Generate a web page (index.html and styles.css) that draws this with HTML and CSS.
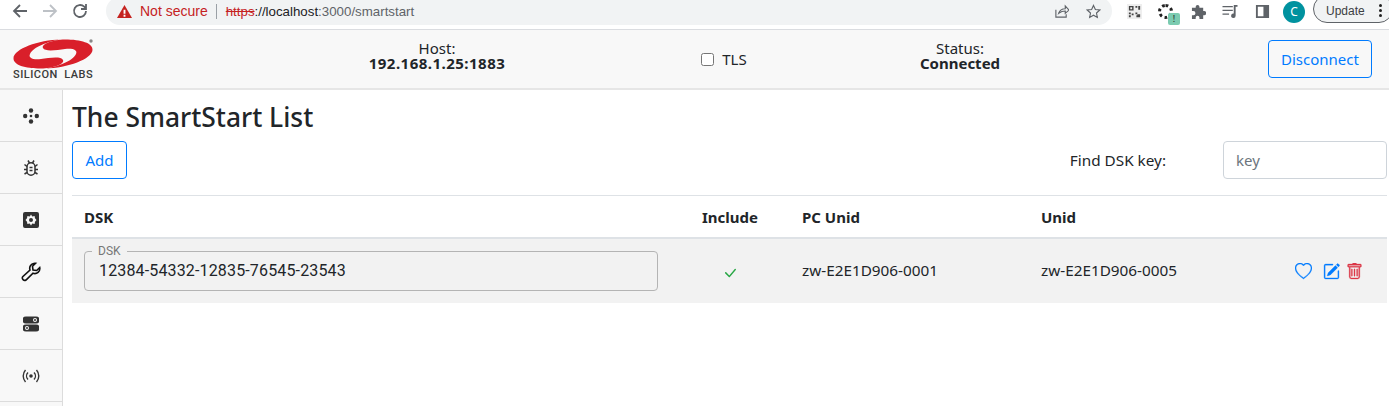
FILE: index.html
```html
<!DOCTYPE html>
<html>

<head>
    <title>SmartStart</title>
    <link rel="stylesheet" href="styles.css">
</head>

<body>
    <!-- browser toolbar -->
    <div class="chrome">
        <div class="chrome-nav">
            <svg class="nav-btn" viewBox="0 0 16 16"><path d="M15 8H2M8 2 2 8l6 6" /></svg>
            <svg class="nav-btn nav-off" viewBox="0 0 16 16"><path d="M1 8h13M8 2l6 6-6 6" /></svg>
            <svg class="nav-btn" viewBox="0 0 16 16"><path d="M14 8a6 6 0 1 1-1.800-4.300L14 5.500M14 1v5H9" /></svg>
        </div>
        <div class="omnibox">
            <svg class="warn" viewBox="0 0 16 16"><path d="M8 1 16 15H0z" fill="#c5221f" /><path d="M7 6h2v4.500H7zM7 11.500h2v2H7z" fill="#fff" /></svg>
            <span class="not-secure">Not secure</span>
            <span class="omni-sep"></span>
            <span class="url"><s class="https">https</s>://localhost<span class="url-dim">:3000/smartstart</span></span>
            <span class="omni-right">
                <svg class="omni-icon" viewBox="0 0 16 16"><path d="M2 6v8h11v-3M5 10c1-3 4-5 7-5V2l4 4.500L12 10V7.500c-3 0-5 1-7 2.500z" /></svg>
                <svg class="omni-icon" viewBox="0 0 16 16"><path d="m8 1.500 2 4.300 4.700.6-3.500 3.200.9 4.700L8 12l-4.100 2.300.9-4.700-3.500-3.200L6 5.800z" /></svg>
            </span>
        </div>
        <div class="chrome-tools">
            <svg class="ext ext-qr" viewBox="0 0 16 16">
                <rect width="16" height="16" fill="#eee" />
                <path d="M2 2h5v5H2zm1.500 1.500v2h2v-2zM9 2h2v2H9zM12 2h2v4h-2zM2 9h2v2H2zM5 10h2v2H5zM2 12h2v2H2zM9 9h2v2H9zM11 11h3v3h-4v-2h1z" fill="#444" fill-rule="evenodd" />
            </svg>
            <span class="ext-ring"><span class="ext-badge">!</span></span>
            <svg class="ext ext-puzzle" viewBox="0 0 16 16"><path d="M1 4h4V3a2 2 0 0 1 4 0v1h4v3.500h1a2.200 2.200 0 0 1 0 4.500h-1v4H9v-1.500a2 2 0 0 0-4 0V16H1v-4h1.500a2.200 2.200 0 0 0 0-4.500H1z" fill="#5f6368" /></svg>
            <svg class="ext ext-media" viewBox="0 0 16 16"><path d="M0 2h11v1.500H0zM0 6h11v1.500H0zM0 10h7v1.500H0zM12 1h4v2h-2v9.500a2.400 2.400 0 1 1-2-2.300z" fill="#5f6368" /></svg>
            <svg class="ext ext-panel" viewBox="0 0 16 16"><path d="M1 1h14v14H1zM3 3v10h6V3z" fill="#5f6368" fill-rule="evenodd" /></svg>
            <span class="avatar">C</span>
            <span class="update">Update<span class="dots"><i></i><i></i><i></i></span></span>
        </div>
    </div>

    <!-- app header -->
    <header class="navbar">
        <div class="logo">
            <svg class="logo-mark" viewBox="0 0 80 30">
                <path d="M48 .5C25 1 1 10 .5 19 0 26 12 29.500 28 29.500c12 0 24-4.500 22-8.500-2-4-14-2-22-1-8 1-13-1-11-5C20 8 36 2 48 .5z" fill="#d91f2a" />
                <path d="M32 29.500C55 29 79 20 79.500 11 80 4 68 .5 52 .5c-12 0-24 4.500-22 8.500 2 4 14 2 22 1 8-1 13 1 11 5-3 7-19 13-31 14.500z" fill="#d91f2a" />
                <circle cx="78" cy="2" r="1.700" fill="#888" />
            </svg>
            <span class="logo-text">SILICON LABS</span>
        </div>
        <div class="nav-stat"><span class="stat-label">Host:</span><b class="stat-ip">192.168.1.25:1883</b></div>
        <label class="tls"><input type="checkbox" class="tls-box"> TLS</label>
        <div class="nav-stat"><span class="stat-label">Status:</span><b>Connected</b></div>
        <button class="btn btn-disconnect">Disconnect</button>
    </header>

    <div class="layout">
        <nav class="sidebar">
            <a class="side-item">
                <svg viewBox="0 0 16 16"><circle cx="8" cy="2.500" r="2.200" /><circle cx="8" cy="13.500" r="2.200" /><circle cx="2.200" cy="8" r="2.200" /><circle cx="13.800" cy="8" r="2.200" /><circle cx="8" cy="8" r="1.300" /></svg>
            </a>
            <a class="side-item">
                <svg class="side-bug" viewBox="0 0 16 16"><path d="M5 .5 6.500 3M11 .5 9.500 3M1.500 4.500 4 6.500M14.500 4.500 12 6.500M1 9.500h3M15 9.500h-3M1.500 14 4 12.500M14.500 14 12 12.500" /><rect x="4" y="2.800" width="8" height="12.400" rx="4" /><path d="M6.500 7.500h3M6.500 10.500h3" /></svg>
            </a>
            <a class="side-item">
                <svg viewBox="0 0 16 16"><path d="M2 0h12a2 2 0 0 1 2 2v12a2 2 0 0 1-2 2H2a2 2 0 0 1-2-2V2a2 2 0 0 1 2-2zm6 2.500 1.300 1.900 2.300-.4.400 2.300L13.500 8 12 9.700l-.4 2.300-2.300-.4L8 13.500l-1.300-1.900-2.300.4-.4-2.300L2.500 8 4 6.300 4.400 4l2.300.4zm0 3.500a2 2 0 1 0 0 4 2 2 0 0 0 0-4z" fill-rule="evenodd" /></svg>
            </a>
            <a class="side-item side-wrench">
                <svg viewBox="0 0 20 20"><path d="M12.500 1.500a5 5 0 0 1 2-.2l-3 3 .5 3.700 3.700.5 3-3a5 5 0 0 1-6.700 5.700L5 18a2.400 2.400 0 0 1-3.300-3.300l7.300-6.700a5 5 0 0 1 3.500-6.500z" /></svg>
            </a>
            <a class="side-item">
                <svg viewBox="0 0 16 16"><path d="M3 .5h10a3.500 3.500 0 0 1 0 7H3a3.500 3.500 0 0 1 0-7zm9 1.500a2 2 0 1 0 0 4 2 2 0 0 0 0-4zm0 1a1 1 0 1 1 0 2 1 1 0 0 1 0-2zM3 8.500h10a3.500 3.500 0 0 1 0 7H3a3.500 3.500 0 0 1 0-7zm1 1.500a2 2 0 1 0 0 4 2 2 0 0 0 0-4zm0 1a1 1 0 1 1 0 2 1 1 0 0 1 0-2z" fill-rule="evenodd" /></svg>
            </a>
            <a class="side-item">
                <svg viewBox="0 0 18 14" class="side-radio"><circle cx="9" cy="7" r="1.800" class="radio-dot" /><path d="M6 3.500a5 5 0 0 0 0 7M12 3.500a5 5 0 0 1 0 7M3.500 1a9 9 0 0 0 0 12M14.500 1a9 9 0 0 1 0 12" /></svg>
            </a>
        </nav>

        <main class="content">
            <h3 class="page-title">The SmartStart List</h3>
            <div class="toolbar">
                <button class="btn btn-add">Add</button>
                <label class="find-label">Find DSK key:</label>
                <input class="find-input" type="text" placeholder="key">
            </div>
            <table class="list">
                <thead>
                    <tr>
                        <th class="col-dsk">DSK</th>
                        <th class="col-include">Include</th>
                        <th class="col-pc">PC Unid</th>
                        <th class="col-unid">Unid</th>
                        <th></th>
                    </tr>
                </thead>
                <tbody>
                    <tr>
                        <td>
                            <fieldset class="dsk-field">
                                <legend>DSK</legend>
                                <input type="text" value="12384-54332-12835-76545-23543" readonly>
                            </fieldset>
                        </td>
                        <td class="cell-center">
                            <svg class="check" viewBox="0 0 16 16"><path d="M12.736 3.970a.733.733 0 0 1 1.047 0c.286.289.29.756.01 1.050L7.880 12.010a.733.733 0 0 1-1.065.02L3.217 8.384a.757.757 0 0 1 0-1.060.733.733 0 0 1 1.047 0l3.052 3.093 5.400-6.425a.247.247 0 0 1 .02-.022Z" /></svg>
                        </td>
                        <td class="cell-text">zw-E2E1D906-0001</td>
                        <td class="cell-text">zw-E2E1D906-0005</td>
                        <td class="cell-actions">
                            <div class="actions">
                                <svg class="act act-blue" viewBox="0 0 16 16"><path d="m8 2.748-.717-.737C5.600.281 2.514.878 1.400 3.053c-.523 1.023-.641 2.500.314 4.385.92 1.815 2.834 3.989 6.286 6.357 3.452-2.368 5.365-4.542 6.286-6.357.955-1.886.838-3.362.314-4.385C13.486.878 10.400.28 8.717 2.010L8 2.748zM8 15C-7.333 4.868 3.279-3.040 7.824 1.143c.06.055.119.112.176.171a3.120 3.120 0 0 1 .176-.17C12.720-3.042 23.333 4.867 8 15z" /></svg>
                                <svg class="act act-blue act-edit" viewBox="0 0 16 16"><path d="M15.502 1.940a.5.5 0 0 1 0 .706L14.459 3.690l-2-2L13.502.646a.5.5 0 0 1 .707 0l1.293 1.293zm-1.750 2.456-2-2L4.939 9.210a.5.5 0 0 0-.121.196l-.805 2.414a.25.25 0 0 0 .316.316l2.414-.805a.5.5 0 0 0 .196-.12l6.813-6.814z" /><path d="M1 13.500A1.500 1.500 0 0 0 2.500 15h11a1.500 1.500 0 0 0 1.500-1.500v-6a.5.5 0 0 0-1 0v6a.5.5 0 0 1-.5.5h-11a.5.5 0 0 1-.5-.5v-11a.5.5 0 0 1 .5-.5H9a.5.5 0 0 0 0-1H2.500A1.500 1.500 0 0 0 1 2.500v11z" /></svg>
                                <svg class="act act-red act-trash" viewBox="0 0 16 16"><path d="M5.500 5.500A.5.5 0 0 1 6 6v6a.5.5 0 0 1-1 0V6a.5.5 0 0 1 .5-.5zm2.500 0a.5.5 0 0 1 .5.5v6a.5.5 0 0 1-1 0V6a.5.5 0 0 1 .5-.5zm3 .5a.5.5 0 0 0-1 0v6a.5.5 0 0 0 1 0V6z" /><path d="M14.500 3a1 1 0 0 1-1 1H13v9a2 2 0 0 1-2 2H5a2 2 0 0 1-2-2V4h-.5a1 1 0 0 1-1-1V2a1 1 0 0 1 1-1H6a1 1 0 0 1 1-1h2a1 1 0 0 1 1 1h3.500a1 1 0 0 1 1 1v1zM4.118 4 4 4.059V13a1 1 0 0 0 1 1h6a1 1 0 0 0 1-1V4.059L11.882 4H4.118zM2.500 3V2h11v1h-11z" fill-rule="evenodd" /></svg>
                            </div>
                        </td>
                    </tr>
                </tbody>
            </table>
        </main>
    </div>
</body>

</html>
```

FILE: styles.css
```css
html,
body {
    margin: 0;
    padding: 0;
    height: 406px;
    overflow: hidden;
}

body {
    font-family: "Noto Sans", "Open Sans", sans-serif;
    font-size: 15px;
    color: #212529;
    background-color: #fff;
}

/* browser toolbar */
.chrome {
    display: flex;
    align-items: flex-start;
    height: 29px;
    background-color: #fff;
    border-bottom: 1px solid #dadce0;
}

.chrome-nav {
    display: flex;
    flex: none;
    gap: 14px;
    width: 106px;
    box-sizing: border-box;
    padding: 3px 0 0 12px;
}

.nav-btn {
    width: 16px;
    height: 16px;
    fill: none;
    stroke: #5f6368;
    stroke-width: 1.800;
}

.nav-off {
    stroke: #bdc1c6;
}

.omnibox {
    display: flex;
    align-items: center;
    flex: none;
    width: 1006px;
    height: 28px;
    margin-top: -3px;
    box-sizing: border-box;
    padding-left: 11px;
    background-color: #f1f3f4;
    border-radius: 14px;
    font-family: "Liberation Sans", Arial, sans-serif;
    font-size: 14px;
}

.warn {
    width: 15px;
    height: 15px;
    margin-right: 8px;
}

.not-secure {
    color: #c5221f;
}

.omni-sep {
    width: 1px;
    height: 15px;
    margin: 0 9px 0 8px;
    background-color: #9aa0a6;
}

.url {
    color: #202124;
    font-size: 13.300px;
}

.url-dim {
    color: #5f6368;
}

.https {
    color: #c5221f;
}

.omni-right {
    display: flex;
    gap: 17px;
    margin-left: auto;
    padding-right: 11px;
}

.omni-icon {
    width: 15px;
    height: 15px;
    fill: none;
    stroke: #5f6368;
    stroke-width: 1.200;
}

.chrome-tools {
    display: flex;
    flex: none;
    align-items: center;
    height: 23px;
    padding-left: 15px;
}

.ext {
    width: 15px;
    height: 15px;
    flex: none;
}

.ext-ring {
    position: relative;
    flex: none;
    width: 9px;
    height: 9px;
    margin-left: 16px;
    border: 3px dotted #222;
    border-radius: 50%;
}

.ext-badge {
    position: absolute;
    left: 7px;
    top: 6px;
    width: 12px;
    height: 12px;
    background-color: #7bcbb0;
    border-radius: 2px;
    color: #222;
    font-size: 9px;
    line-height: 12px;
    text-align: center;
}

.ext-puzzle {
    margin-left: 18px;
}

.ext-media {
    width: 16px;
    margin-left: 16px;
}

.ext-panel {
    margin-left: 17px;
}

.avatar {
    flex: none;
    width: 22px;
    height: 22px;
    margin-left: 13px;
    background-color: #00929f;
    border-radius: 50%;
    color: #fff;
    font-size: 12px;
    line-height: 22px;
    text-align: center;
}

.update {
    display: flex;
    align-items: center;
    flex: none;
    width: 80px;
    height: 28px;
    margin: -5px 0 0 8px;
    box-sizing: border-box;
    padding: 3px 0 0 12px;
    background-color: #f1f3f4;
    border: 1px solid #5f6368;
    border-radius: 14px;
    color: #3c4043;
    font-family: "Liberation Sans", Arial, sans-serif;
    font-size: 12px;
}

.dots {
    display: flex;
    flex-direction: column;
    gap: 2px;
    margin-left: 14px;
}

.dots i {
    width: 3px;
    height: 3px;
    background-color: #222;
    border-radius: 50%;
}

/* app header */
.navbar {
    display: grid;
    grid-template-columns: 227px 394px 180px 292px 1fr;
    align-items: center;
    height: 58px;
    padding: 0 17px 0 13px;
    background-color: #f8f8f8;
    border-bottom: 2px solid #e6e6e6;
}

.logo {
    display: flex;
    flex-direction: column;
    width: 80px;
}

.logo-mark {
    width: 80px;
    height: 30px;
}

.logo-text {
    margin-top: 1px;
    font-family: Roboto, sans-serif;
    font-size: 11px;
    font-weight: 500;
    line-height: 10px;
    letter-spacing: 0.500px;
    word-spacing: 3px;
    white-space: nowrap;
    color: #3a3a3a;
}

.nav-stat {
    padding-bottom: 7px;
    text-align: center;
}

.stat-label {
    display: block;
    height: 16px;
    line-height: 16px;
}

.nav-stat b {
    display: block;
    height: 15px;
    line-height: 15px;
}

.nav-stat .stat-ip {
    letter-spacing: 0.480px;
}

.tls {
    display: flex;
    align-items: center;
    justify-content: center;
    gap: 8px;
}

.tls-box {
    width: 13px;
    height: 13px;
    margin: 0;
}

.btn {
    padding: 0;
    background-color: transparent;
    border: 1px solid #007bff;
    border-radius: 4px;
    color: #007bff;
    font-family: inherit;
    font-size: 15px;
    cursor: pointer;
}

.btn-disconnect {
    justify-self: end;
    width: 104px;
    height: 38px;
}

/* page body */
.layout {
    display: flex;
}

.sidebar {
    flex: none;
    width: 62px;
    height: 330px;
    background-color: #f8f8f8;
    border-right: 1px solid #dcdcdc;
}

.side-item {
    display: flex;
    align-items: center;
    justify-content: center;
    height: 51px;
    border-bottom: 1px solid #dcdcdc;
}

.side-item svg {
    width: 16px;
    height: 16px;
    fill: #333;
}

.side-item .side-bug {
    fill: none;
    stroke: #333;
    stroke-width: 1.500;
}

.side-wrench svg {
    width: 20px;
    height: 20px;
    fill: none;
    stroke: #111;
    stroke-width: 1.600;
}

.side-item .side-radio {
    width: 18px;
    height: 14px;
    fill: none;
    stroke: #333;
    stroke-width: 1.400;
}

.radio-dot {
    fill: #333;
    stroke: none;
}

.content {
    flex: 1;
    min-width: 0;
    padding: 11px 2px 0 9px;
}

.page-title {
    margin: 0 0 8px;
    font-size: 26.400px;
    font-weight: 500;
    line-height: 32px;
}

.toolbar {
    display: flex;
    align-items: center;
    height: 38px;
    padding-bottom: 16px;
    border-bottom: 1px solid #dee2e6;
}

.btn-add {
    width: 55px;
    height: 38px;
}

.find-label {
    margin-left: auto;
    margin-right: 57px;
    font-size: 15.300px;
}

.find-input {
    width: 164px;
    height: 38px;
    box-sizing: border-box;
    padding: 0 12px;
    background-color: #fff;
    border: 1px solid #ced4da;
    border-radius: 4px;
    font-family: inherit;
    font-size: 15px;
}

.find-input::placeholder {
    color: #6c757d;
}

/* list table */
.list {
    width: 100%;
    table-layout: fixed;
    border-collapse: collapse;
}

.list th {
    height: 41px;
    padding: 0 12px;
    border-bottom: 2px solid #dee2e6;
    font-weight: 700;
    text-align: left;
}

.col-dsk {
    width: 574px;
}

.col-include {
    width: 96px;
}

.col-pc,
.col-unid {
    width: 215px;
}

.list th.col-include {
    text-align: center;
}

.list td {
    height: 64px;
    padding: 0 12px;
    background-color: #f2f2f2;
    font-size: 15.300px;
}

.list td.cell-center {
    text-align: center;
}

.list td.cell-text {
    height: 62px;
    padding-bottom: 2px;
}

.dsk-field {
    height: 45px;
    box-sizing: border-box;
    margin: 0 0 5px;
    padding: 0 14px;
    border: 1px solid #b4b4b4;
    border-radius: 4px;
}

.dsk-field legend {
    margin-left: -7px;
    padding: 0 6px;
    color: #777;
    font-family: Roboto, sans-serif;
    font-size: 12px;
    line-height: 11px;
}

.dsk-field input {
    width: 100%;
    padding: 4px 0 0;
    background: transparent;
    border: 0;
    outline: 0;
    color: #212529;
    font-family: Roboto, sans-serif;
    font-size: 16px;
    letter-spacing: 0.150px;
}

.check {
    width: 16px;
    height: 16px;
    fill: #28a745;
    vertical-align: middle;
}

.list td.cell-actions {
    padding: 0 24px 0 0;
}

.actions {
    display: flex;
    justify-content: flex-end;
}

.act {
    width: 17px;
    height: 17px;
    flex: none;
    stroke-width: 0.300;
}

.act-edit {
    margin-left: 11px;
}

.act-trash {
    margin-left: 6px;
}

.act-blue {
    fill: #007bff;
    stroke: #007bff;
}

.act-red {
    fill: #dc3545;
    stroke: #dc3545;
}
```
